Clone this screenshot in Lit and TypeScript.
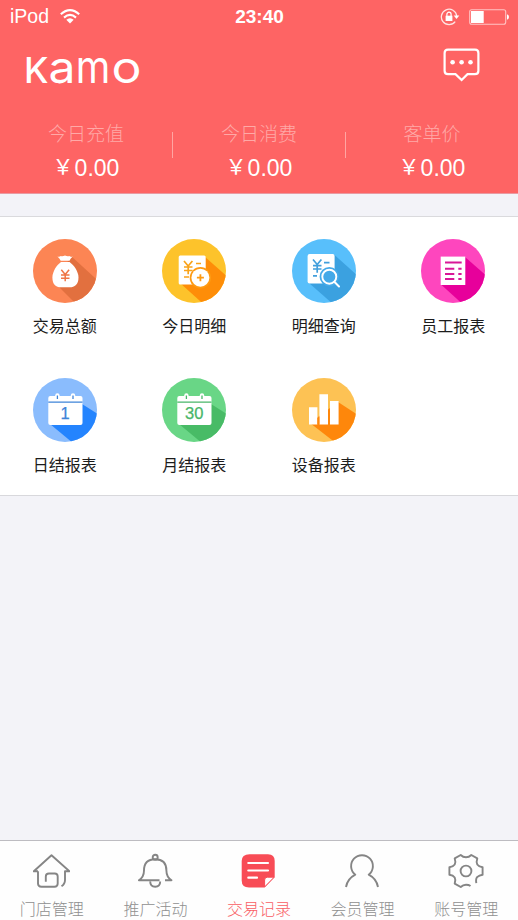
import { LitElement, html, css, svg } from "lit";
import { customElement, property } from "lit/decorators.js";

const badge = (id: string, base: string, shade: string, shadow: string, art: unknown) => html`
  <svg class="badge" width="64" height="64" viewBox="0 0 64 64">
    <clipPath id=${id}><circle cx="32" cy="32" r="32" /></clipPath>
    <g clip-path="url(#${id})">
      <rect width="64" height="64" fill=${base} />
      <path d=${shadow} fill=${shade} />
      ${art}
    </g>
  </svg>`;

const calendar = (ink: string, day: string) => svg`
  <rect x="15.3" y="18" width="34.2" height="29" rx="2" fill="#fff"/>
  <rect x="22.2" y="15.3" width="4.4" height="7" rx="2.2" fill="#fff"/>
  <rect x="37.8" y="15.3" width="4.4" height="7" rx="2.2" fill="#fff"/>
  <path d="M24.4 17.5V21M40 17.5V21" stroke=${ink} stroke-width="1.3"/>
  <path d="M15.3 24.2H49.5" stroke=${ink} stroke-width="1.2"/>
  <text x="32.2" y="41.4" text-anchor="middle" font-family="Liberation Sans, sans-serif" font-size="16.5" fill=${ink} stroke=${ink} stroke-width=".25">${day}</text>`;

const entries = [
  {
    label: "交易总额",
    icon: badge("c1", "#fc8554", "#e2703f", "M38 17L72 48L58 80L22 44Z", svg`
      <path d="M24.4 17.4q2 1 3.4-.4q2 .6 4.2-.6q2.200 1.200 4.200.6q1.500 1.400 3.600.4q-2.300 1.600-3.300 4.300h-8.800q-1-2.700-3.300-4.300z" fill="#fff"/>
      <path d="M28 23h8.600c4.500 3.300 8.900 9.800 8.900 15.500c0 7-4 9.800-8.700 9.800h-8.900c-5 0-8.500-2.800-8.500-9.800c0-5.700 4-12.200 8.600-15.500z" fill="#fff"/>
      <path d="M28.300 30.800l3.900 4.700l3.900-4.700M32.200 35.500v6.700M28 36h8.500M28 39.200h8.500" fill="none" stroke="#ee7646" stroke-width="1.500"/>`),
  },
  {
    label: "今日明细",
    icon: badge("c2", "#fdc32b", "#fe8d08", "M42 17L76 47L58 80L18 44Z", svg`
      <rect x="16.700" y="16.500" width="27" height="29" rx="1.500" fill="#fff"/>
      <path d="M22 22l4.200 5l4.200-5M26.200 27v8.200M22 28h8.500M22 31.500h8.500M34 24.500h5M22 38h5" fill="none" stroke="#f9a31a" stroke-width="1.700"/>
      <circle cx="38.400" cy="38.700" r="10.700" fill="#fe9a12"/>
      <circle cx="38.400" cy="38.700" r="9" fill="#fff"/>
      <path d="M34.900 38.700h7M38.400 35.200v7" stroke="#fe9a12" stroke-width="1.800"/>`),
  },
  {
    label: "明细查询",
    icon: badge("c3", "#58bffb", "#3ba1e0", "M42 15.500L76 46L58 80L17 44Z", svg`
      <rect x="15.600" y="15" width="27" height="29.500" rx="2" fill="#fff"/>
      <path d="M21 20.500l4.200 5l4.200-5M25.200 25.500v8.200M21 26.700h8.500M21 30h8.500M32 23.700h5.500M21 36.800h4" fill="none" stroke="#429fdc" stroke-width="1.700"/>
      <circle cx="37.300" cy="37.700" r="9.700" fill="#44a9e8"/>
      <circle cx="37.300" cy="37.700" r="7" fill="#44a9e8" stroke="#fff" stroke-width="1.900"/>
      <path d="M42.300 42.800L47 47.500" stroke="#fff" stroke-width="2" stroke-linecap="round"/>`),
  },
  {
    label: "员工报表",
    icon: badge("c4", "#fe46be", "#e7009b", "M44 18L76 46L58 80L20 45.500Z", svg`
      <rect x="19.700" y="17.600" width="24.600" height="28.400" fill="#fff"/>
      <path d="M24 23.400h16.700M24 29.800h9.300M24 35h9.300M24 40h9.300M37.300 29.800h3.300M37.300 35h3.300M37.300 40h3.300" stroke="#d81898" stroke-width="2"/>`),
  },
  {
    label: "日结报表",
    icon: badge("c5", "#8abcfd", "#2484fe", "M49 26L76 43L58 80L17 46Z", calendar("#3e84d8", "1")),
  },
  {
    label: "月结报表",
    icon: badge("c6", "#69d686", "#48bb66", "M49 26L76 43L58 80L17 46Z", calendar("#48b668", "30")),
  },
  {
    label: "设备报表",
    icon: badge("c7", "#fdc254", "#fe870b", "M46 24L72 41L58 76L18 45Z", svg`
      <path d="M17 29.300h8.400V46.500H17zM27.400 16.300H36V46.500h-8.600zM38 23h8.600V46.500H38z" fill="#fff"/>
      <path d="M25.400 40l2-1.500v8h-2z" fill="#fe870b"/>`),
  },
];

const tabs = [
  {
    label: "门店管理",
    icon: svg`<path d="M5 18.300H.8L18.500 2.200L36.500 18.300H32V27q0 4-3.500 6.300M5 18.300V30.500q0 3.200 3.500 3.200H21.500q3.200 0 3.200-3.200V23.500q0-3-3-3H16q-3.200 0-3.200 3V28.700"/>`,
  },
  {
    label: "推广活动",
    icon: svg`<circle cx="18.200" cy="4.300" r="2.500"/><path d="M22.500 27.300H1.900Q7 24 7 17.500Q7 6.300 18.200 6.300Q29.400 6.300 29.400 17.500Q29.400 24 34.500 27.300H28M13.200 28.500q0 5.200 5 5.200t5-5.200"/>`,
  },
  {
    label: "交易记录",
    active: true,
    icon: svg`
      <path d="M9.500 1.200H28q6.700 0 6.700 6.700V24l-10 10.500H9Q1.700 34.500 1.700 27.500V8Q1.700 1.200 9.500 1.200z" fill="#f84c56" stroke="none"/>
      <path d="M24.600 33.900V27q0-2.800 2.800-2.800h6.800z" fill="#fff" stroke="#f84c56" stroke-width="1"/>
      <path d="M8.300 10H28M8.300 17.500H28M8.300 24.700H17" stroke="#fff" stroke-width="2.200" stroke-linecap="round"/>`,
  },
  {
    label: "会员管理",
    icon: svg`<path d="M2 34Q3.500 25.800 11.300 21.700A10.900 10.900 0 1 1 24.700 21.700Q32.500 25.800 34 34"/>`,
  },
  {
    label: "账号管理",
    icon: svg`<circle cx="18" cy="18" r="5.400"/>
      <path d="M28.300 30.200Q27.500 25.500 29.500 23.800Q31 22.300 34.600 21.700V14.300Q30.800 13.800 29.300 11.500Q28 9.200 29.300 5.400L23.300 2Q21 4.300 18 4.300T12.700 2L6.700 5.400Q8 9.200 6.700 11.500Q5.200 13.800 1.400 14.300V21.700Q5.200 22.200 6.700 24.500Q8 26.800 6.700 30.600L12.700 34Q15 31.700 18 31.700Q20.800 31.700 22.500 33"/>`,
  },
];

@customElement("stat-item")
class StatItem extends LitElement {
  @property() label = "";
  @property() value = "";
  static styles = css`
    :host { display: flex; flex-direction: column; align-items: center; flex: 1; padding-top: 15px; }
    .label { font-size: 19px; line-height: 26px; font-weight: 300; color: #ffa9a7; }
    .value { margin-top: 9px; display: flex; align-items: center; line-height: 26px; color: #fff; font-size: 23px; }
    .yen { font-family: "Noto Sans CJK SC", sans-serif; font-size: 21px; font-weight: 400; padding-bottom: 6px; line-height: 20px; }
    .num { font-family: "Liberation Sans", sans-serif; margin-left: 1px; }
  `;
  render() {
    return html`<div class="label">${this.label}</div>
      <div class="value"><span class="yen">￥</span><span class="num">${this.value}</span></div>`;
  }
}

@customElement("app-root")
class AppRoot extends LitElement {
  static styles = css`
    :host { display: flex; flex-direction: column; height: 920px; width: 518px; overflow: hidden; background: #f3f3f8; font-family: "Noto Sans CJK SC", sans-serif; }
    svg { display: block; }
    .header { background: #fe6464; height: 193px; border-bottom: 1px solid #e99aa2; color: #fff; flex: none; box-sizing: content-box; }
    .status { display: grid; grid-template-columns: 1fr auto 1fr; align-items: center; height: 33px; padding: 0 9px 0 10px; font-family: "Liberation Sans", sans-serif; }
    .left, .right { display: flex; align-items: center; }
    .left { gap: 11px; font-size: 19.5px; }
    .right { justify-content: flex-end; gap: 9px; }
    .time { font-size: 19px; font-weight: 700; }
    .brand { display: flex; align-items: flex-start; justify-content: space-between; height: 72px; padding: 0 38px 0 21px; box-sizing: border-box; }
    .message { margin-top: 15px; }
    .stats { display: flex; height: 88px; }
    .rule { width: 1px; height: 26px; margin-top: 27px; background: #ffa5a2; }
    .panel { margin-top: 22px; height: 278px; border-top: 1px solid #dadadd; border-bottom: 1px solid #d8d8dc; background: #fff; display: grid; grid-template-columns: repeat(4, 129.5px); grid-template-rows: 139px 139px; flex: none; }
    .entry { display: flex; flex-direction: column; align-items: center; padding-top: 22px; }
    .name { font-size: 16px; line-height: 24px; margin-top: 10px; color: #1c1c1c; }
    .tabs { margin-top: auto; height: 79px; border-top: 1px solid #bdbcc1; background: #fefefe; display: grid; grid-template-columns: repeat(5, 1fr); }
    .tab { display: flex; flex-direction: column; align-items: center; padding-top: 12px; color: #8f8f8f; font-size: 16px; font-weight: 300; line-height: 24px; gap: 7px; }
    .tab svg { fill: none; stroke: #858585; stroke-width: 1.9; stroke-linejoin: round; }
    .active { color: #f95d64; }
  `;
  render() {
    return html`
      <div class="header">
        <div class="status">
          <div class="left">
            <span>iPod</span>
            <svg width="20" height="15" viewBox="0 0 20 15">
              <path d="M.8 5.200Q10-3 19.200 5.200M4 8.600Q10 3.300 16 8.600" fill="none" stroke="#fff" stroke-width="2.100"/>
              <path d="M6.300 10.800Q10 7.700 13.700 10.800L10 14.600z" fill="#fff"/>
            </svg>
          </div>
          <span class="time">23:40</span>
          <div class="right">
            <svg width="20" height="18" viewBox="0 0 20 18">
              <path d="M15.200 13.600A7.700 7.700 0 1 1 16.700 8" fill="none" stroke="#ffe3e2" stroke-width="1.300"/>
              <path d="M13.700 7.500h5.600l-2.800 3.600z" fill="#fff"/>
              <rect x="5.600" y="7.700" width="6.800" height="5.300" fill="#fff"/>
              <path d="M6.900 8V6.300a2.100 2.100 0 0 1 4.200 0V8" fill="none" stroke="#fff" stroke-width="1.200"/>
            </svg>
            <svg width="40" height="16" viewBox="0 0 40 16">
              <rect x=".7" y=".7" width="36" height="14.600" rx="2" fill="none" stroke="#ffc4c3" stroke-width="1.100"/>
              <rect x="2" y="2" width="12.700" height="12" fill="#fff"/>
              <path d="M38 5.300q2 .4 2 2.700t-2 2.700z" fill="#fff"/>
            </svg>
          </div>
        </div>
        <div class="brand">
          <svg width="126" height="72" viewBox="0 0 126 72" fill="#fff" font-family="Inter, sans-serif" font-weight="500">
            <text x="3" y="50" font-size="36" textLength="24.500" lengthAdjust="spacingAndGlyphs">K</text>
            <text x="27.500" y="49.700" font-size="44" textLength="27" lengthAdjust="spacingAndGlyphs" font-weight="400">a</text>
            <text x="54.800" y="50" font-size="45" textLength="34.500" lengthAdjust="spacingAndGlyphs" font-weight="400">m</text>
            <text x="90.500" y="49.700" font-size="44" textLength="30" lengthAdjust="spacingAndGlyphs" font-weight="400">o</text>
          </svg>
          <svg class="message" width="37" height="35" viewBox="0 0 37 35">
            <path d="M5 1.700H32q3.400 0 3.400 3.400V22.800q0 3.400-3.400 3.400H24.500L18.600 32L12.500 26.200H5q-3.400 0-3.400-3.400V5.100q0-3.400 3.400-3.400z" fill="none" stroke="#fff" stroke-width="2.200"/>
            <g fill="#fff"><circle cx="9.600" cy="14.300" r="2.300"/><circle cx="18.600" cy="14.300" r="2.300"/><circle cx="27.500" cy="14.300" r="2.300"/></g>
          </svg>
        </div>
        <div class="stats">
          <stat-item label="今日充值" value="0.00"></stat-item>
          <div class="rule"></div>
          <stat-item label="今日消费" value="0.00"></stat-item>
          <div class="rule"></div>
          <stat-item label="客单价" value="0.00"></stat-item>
        </div>
      </div>
      <div class="panel">
        ${entries.map((e) => html`<div class="entry">${e.icon}<div class="name">${e.label}</div></div>`)}
      </div>
      <div class="tabs">
        ${tabs.map((t) => html`<div class="tab ${t.active ? "active" : ""}">
          <svg width="37" height="36" viewBox="0 0 37 36">${t.icon}</svg><span>${t.label}</span></div>`)}
      </div>`;
  }
}
